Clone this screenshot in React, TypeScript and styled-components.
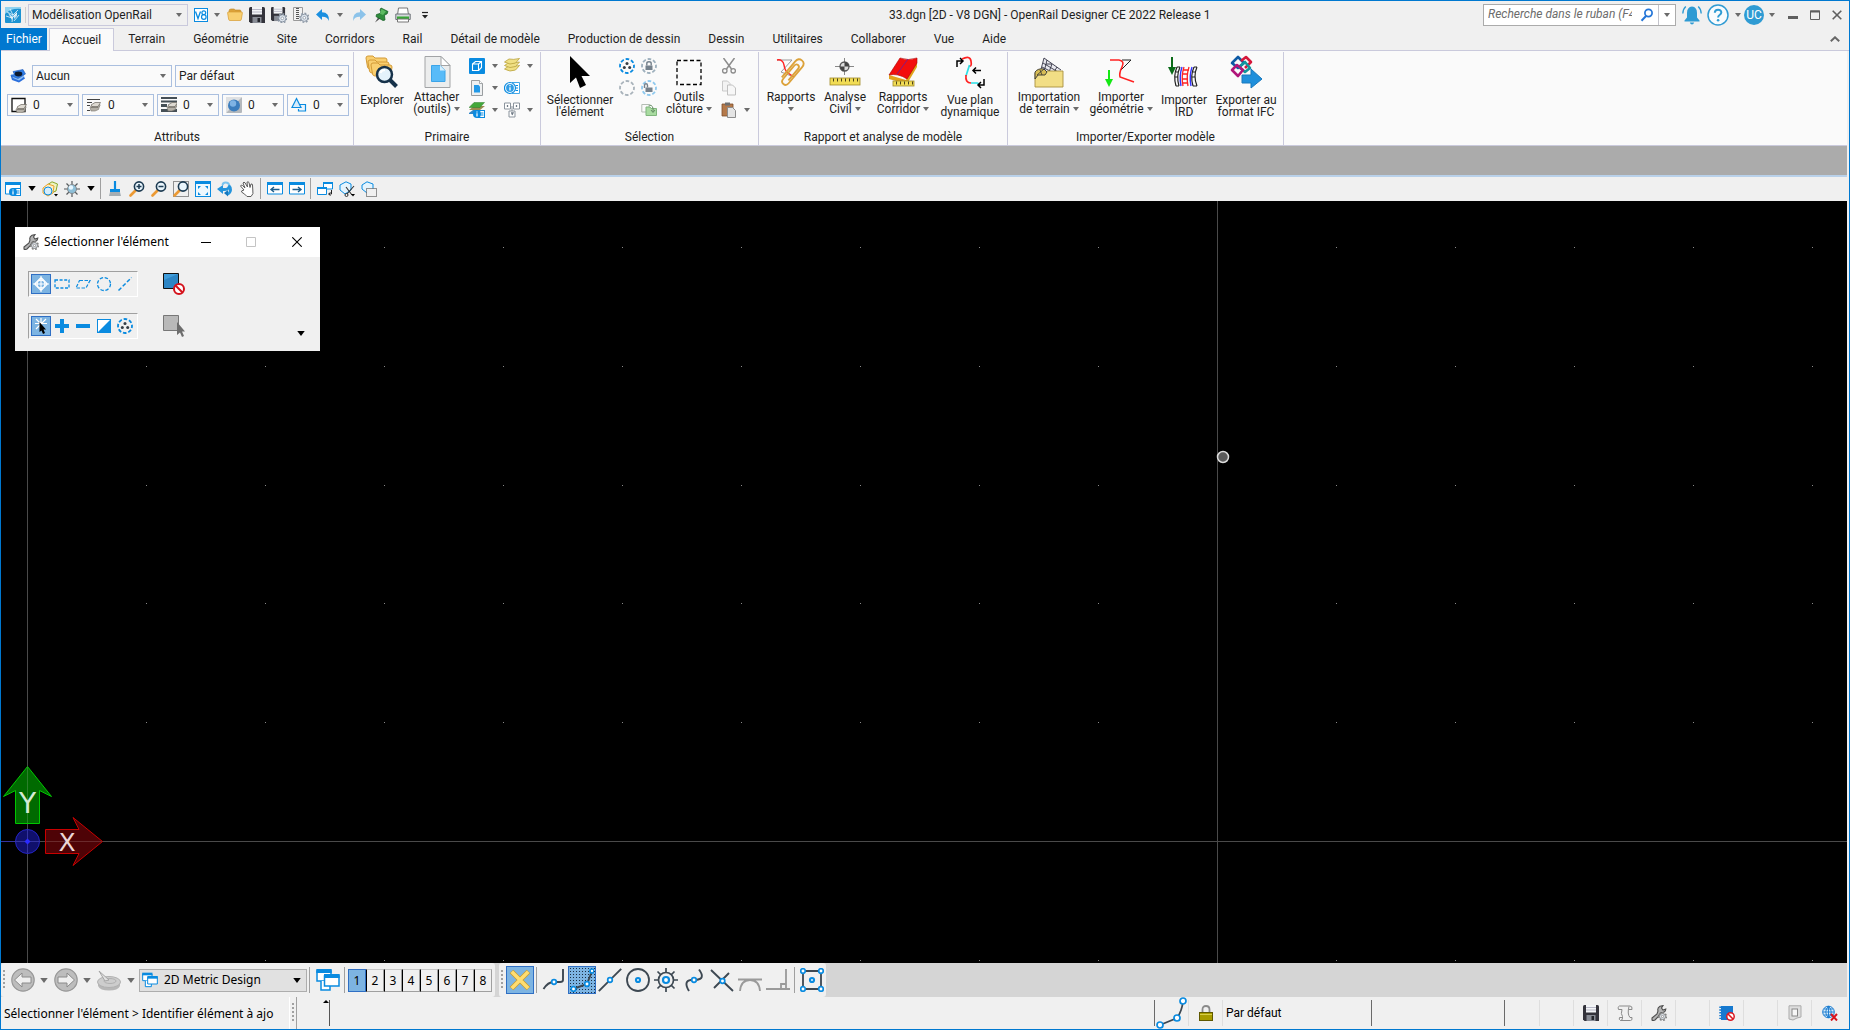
import React from "react";
import styled, { createGlobalStyle, css } from "styled-components";

/* ---------- tokens ---------- */
const UI = `Roboto, "Open Sans", sans-serif`;
const WIDE = `"Noto Sans", "Open Sans", sans-serif`;
const BLUE = "#0a8be0";
const ACCENT = "#0078d0";
const CHROME = "#f0f0f0";
const PANEL = "#fafafa";
const LINE = "#cacadc";
const PRESSED = "#7db4e2";

const Global = createGlobalStyle`
  *, *::before, *::after { box-sizing: border-box; }
  html, body, #root { height: 100%; }
  body { margin: 0; font: 12px/16px ${UI}; color: #1e1e1e; background: ${CHROME}; }
  button, select, input { font: inherit; color: inherit; margin: 0; }
  button { border: 0; padding: 0; background: none; }
  svg { display: block; flex: none; }
`;

/* ---------- drawing helpers ---------- */
type SvgProps = { w?: number; h?: number; box?: string; children: React.ReactNode };
const Svg = ({ w = 16, h = w, box, children }: SvgProps) => (
  <svg width={w} height={h} viewBox={box ?? `0 0 ${w} ${h}`} fill="none" aria-hidden="true">
    {children}
  </svg>
);

const Caret = ({ color = "#6b6b6b", size = 6 }: { color?: string; size?: number }) => (
  <Svg w={size} h={size / 2 + 1} box="0 0 6 4">
    <path d="M0 0H6L3 4Z" fill={color} />
  </Svg>
);

/* ---------- 16px icons ---------- */
const LogoIcon = () => (
  <Svg>
    <rect width="16" height="16" rx="1" fill="#1c93d2" />
    <path d="M0 7Q6 1 16 2V0H0Z" fill="#8fd2f0" />
    <path d="M2 5L8 8L7 15M5 2L8 8L13 3M1 9L7 11L12 6M9 14L14 8" stroke="#fff" strokeWidth=".9" opacity=".8" />
    <path d="M3 6L7 9V13ZM9 8L12 5V9L9 12Z" fill="#fff" opacity=".75" />
  </Svg>
);
const V8Icon = () => (
  <Svg w={14}>
    <rect x=".5" y=".5" width="13" height="13" fill="#fff" stroke={BLUE} />
    <path d="M1.500 3.500L4 10.500L6.500 3.500" stroke={BLUE} strokeWidth="1.300" />
    <circle cx="9.800" cy="4.700" r="1.900" stroke={BLUE} strokeWidth="1.200" />
    <circle cx="9.800" cy="9" r="2.300" stroke={BLUE} strokeWidth="1.200" />
  </Svg>
);
const FolderIcon = () => (
  <Svg>
    <path d="M2 4Q2 2 4 2H7L8.500 3H13Q14 3 14 4.500V6H2Z" fill="#dba23a" stroke="#b98325" strokeWidth=".6" />
    <path d="M.6 6Q.5 5 1.500 5H14.500Q15.500 5 15.400 6L14.300 12.500Q14.100 13.500 13 13.500H3Q1.900 13.500 1.700 12.500Z" fill="#f8cf70" stroke="#d79b30" strokeWidth=".7" />
  </Svg>
);
const FloppyShape = () => (
  <>
    <path d="M0 1.500Q0 0 1.500 0H14.500Q16 0 16 1.500V16H1.500L0 14.500Z" fill="#33333b" />
    <rect x="3" y="0" width="10" height="7.500" fill="#f3f5f7" />
    <path d="M3 2.500H13M3 5H13" stroke="#aab" strokeWidth=".8" />
    <rect x="3.500" y="10" width="9" height="6" fill="#888c95" />
    <rect x="8.500" y="11" width="2.500" height="4" fill="#22242a" />
  </>
);
const SaveIcon = () => <Svg><FloppyShape /></Svg>;
const Gear = ({ x, y, r = 3.6, c = "#8d98a6" }: { x: number; y: number; r?: number; c?: string }) => (
  <g>
    <circle cx={x} cy={y} r={r + 0.8} stroke={c} strokeWidth="1.600" strokeDasharray="1.8 1.6" />
    <circle cx={x} cy={y} r={r} fill="#dfe6ee" stroke={c} />
    <circle cx={x} cy={y} r={r / 2.6} fill="#fff" stroke={c} strokeWidth=".8" />
  </g>
);
const SaveSettingsIcon = () => <Svg><g transform="scale(.88)"><FloppyShape /></g><Gear x={11.300} y={11.300} /></Svg>;
const ZipIcon = () => (
  <Svg>
    <path d="M.5 .5H9.500V13.500H.5Z" fill="#f2f2f2" stroke="#9a9a9a" />
    <path d="M4.500 1V13" stroke="#555" strokeWidth="3" strokeDasharray="1 1" />
    <Gear x={11.300} y={10.800} />
  </Svg>
);
const UndoIcon = ({ flip = false, color = "#1a8fe0" }: { flip?: boolean; color?: string }) => (
  <Svg>
    <path transform={flip ? "translate(16 0) scale(-1 1)" : undefined} d="M1 7.500L7 2V5.300Q14.500 5.500 14 14Q12.500 9.500 7 9.700V13Z" fill={color} />
  </Svg>
);
const PinIcon = () => (
  <Svg>
    <path d="M6 9L2 15.500L8 11Z" fill="#555" />
    <path d="M8 1L15 4.500L14 7L12 7.500L11.500 9L12 13L10 13.500L3 9.500L3.500 7.500L7 6.500L8 5L7 3Z" fill="#2f8d3c" stroke="#19632a" strokeWidth=".8" />
    <path d="M8.500 2L13 4.500L10 8L7 6.800Z" fill="#5dbb62" />
  </Svg>
);
const PrintIcon = () => (
  <Svg>
    <path d="M3.500 1H12.500L13.500 8H2.500Z" fill="#fff" stroke="#777" />
    <path d="M.8 7H15.200V12.500H.8Z" fill="#d5d8dc" stroke="#6d7278" />
    <path d="M2 9.500H14V12H2Z" fill="#38a737" />
    <path d="M2.500 12H13.500V15H2.500Z" fill="#fff" stroke="#777" />
  </Svg>
);
const CustomizeIcon = () => (
  <Svg w={8}>
    <path d="M1 1.500H7" stroke="#222" strokeWidth="1.200" />
    <path d="M1 4H7L4 7.500Z" fill="#222" />
  </Svg>
);
const SearchIcon = () => (
  <Svg w={14}>
    <circle cx="8.500" cy="5" r="3.600" stroke="#2375d8" strokeWidth="1.700" />
    <path d="M6 8L1.500 12.700" stroke="#2375d8" strokeWidth="2" />
  </Svg>
);
const BellIcon = () => (
  <Svg w={20}>
    <path d="M10 1.500Q15 2 15 8V12.500L17.500 15.500V16.500H2.500V15.500L5 12.500V8Q5 2 10 1.500Z" fill="#2f9bd3" />
    <path d="M7.800 17.500H12.200Q11.500 19.500 10 19.500T7.800 17.500Z" fill="#2f9bd3" />
    <path d="M3.800 1.500Q1 4 .8 8.500M16.200 1.500Q19 4 19.200 8.500" stroke="#2f9bd3" strokeWidth="1.400" />
  </Svg>
);
const HelpIcon = () => (
  <Svg w={22}>
    <circle cx="11" cy="11" r="10" fill="#f8fbfd" stroke="#2f9bd3" strokeWidth="1.500" />
    <path d="M7.800 8.800Q7.900 5.800 11.100 5.800T14.300 8.600Q14.300 10 12.600 11Q11.100 12 11.100 13.500" stroke="#2f9bd3" strokeWidth="2" />
    <circle cx="11.100" cy="16.200" r="1.300" fill="#2f9bd3" />
  </Svg>
);
const MinIcon = () => <Svg w={10}><rect y="6" width="10" height="3" fill="#5f5f5f" /></Svg>;
const MaxIcon = () => (
  <Svg w={10}><path d="M.5 1H9.500V9.500H.5Z" stroke="#5f5f5f" /><path d="M0 1.500H10" stroke="#5f5f5f" strokeWidth="2" /></Svg>
);
const CloseIcon = () => <Svg w={10}><path d="M.7 .7L9.300 9.300M9.300 .7L.7 9.300" stroke="#5f5f5f" strokeWidth="1.600" /></Svg>;
const ChevronUp = () => <Svg w={10} h={6}><path d="M.8 5.200L5 1.300L9.200 5.200" stroke="#666" strokeWidth="2" /></Svg>;

const LayerIcon = () => (
  <Svg>
    <path d="M.5 7L2 12L9 14.500L15 10.500L13 7Z" fill="#2a6fdc" />
    <path d="M1 6L3 10L9 12.500L14.500 8.500L12 6Z" fill="#8cc0f8" />
    <path d="M3 3.500L13 1.500L15.500 6L8 10.500L1.500 8L4.500 6.500Z" fill="#2f7de6" stroke="#1c58b8" strokeWidth=".6" />
    <ellipse cx="8.500" cy="6" rx="3.800" ry="2.400" fill="#0c1a30" />
  </Svg>
);
const Stack = ({ x = 5, y = 7 }: { x?: number; y?: number }) => (
  <g transform={`translate(${x} ${y})`}>
    <path d="M0 5L4 2.500H10L8.500 7.500L5 9H1Z" fill="#b5b1a8" stroke="#77736b" strokeWidth=".6" />
    <path d="M1 3L5 .5H10.500L8 4.500H2ZM1 5.500H8L10 3.500" fill="#dedad2" stroke="#6a665e" strokeWidth=".7" />
  </g>
);
const ColorBoxIcon = () => (
  <Svg><path d="M1 1.500H14V14.500H1Z" fill="#fff" stroke="#111" strokeWidth="1.300" /><Stack /></Svg>
);
const LineStyleIcon = () => (
  <Svg><path d="M1 2.500H14M1 5.500H6M1 8.500H4M1 13.500H4" stroke="#444" strokeWidth="1.200" /><Stack x={4} y={5} /></Svg>
);
const WeightIcon = () => (
  <Svg><path d="M0 1H16M0 4.500H16" stroke="#454f56" strokeWidth="1.800" /><path d="M0 8.500H6M0 13.500H16" stroke="#454f56" strokeWidth="3" /><Stack y={5} x={6} /></Svg>
);
const SphereIcon = () => (
  <Svg>
    <rect width="16" height="16" rx="1" fill="#b4b8bc" />
    <path d="M0 0H16L0 16Z" fill="#dfe1e3" />
    <circle cx="8" cy="8.500" r="6" fill="#3c7dbd" />
    <circle cx="7" cy="6.500" r="3.200" fill="#7fb3e4" />
  </Svg>
);
const PriorityIcon = () => (
  <Svg>
    <path d="M8 7.500H14.500V14H7.500V12" fill="#eaf4fc" stroke={BLUE} strokeWidth="1.200" />
    <path d="M5.500 1.500L10 10.500H1Z" fill="#d6ecfb" stroke={BLUE} strokeWidth="1.200" />
  </Svg>
);

const CubeIcon = () => (
  <Svg>
    <rect width="16" height="16" rx="1" fill={BLUE} />
    <path d="M3.500 6H9.500V12.500H3.500ZM3.500 6L6.500 3.500H12.500V9.500L9.500 12.500M9.500 6L12.500 3.500" stroke="#fff" strokeWidth="1.100" />
  </Svg>
);
const DocIcon = () => (
  <Svg>
    <path d="M2.500 .5H10.500L13.500 3.500V15.500H2.500Z" fill="#eef0f1" stroke="#8f9396" strokeWidth=".9" />
    <path d="M10.500 .5V3.500H13.500" fill="#fff" stroke="#8f9396" strokeWidth=".8" />
    <path d="M5 5H9.500L11 6.500V12.500H5Z" fill="#2299e8" />
  </Svg>
);
const InfoBadge = ({ x, y }: { x: number; y: number }) => (
  <g transform={`translate(${x} ${y})`}>
    <rect x="4" y=".5" width="7.500" height="7" fill="#fff" stroke={BLUE} />
    <path d="M8 3H10.500M8 5H10.500" stroke={BLUE} />
    <circle cx="4" cy="4" r="4" fill={BLUE} />
    <path d="M4 3.300V6.500M4 1.500V2.500" stroke="#fff" strokeWidth="1.200" />
  </g>
);
const GreenInfoIcon = () => (
  <Svg>
    <path d="M0 11L4 8H14L10 12H0Z" fill="#2f86c8" />
    <path d="M0 8L5 4H16L11 8Z" fill="#9c8a50" />
    <path d="M0 5.500L5 .5H15.500L11 5.500Z" fill="#43a83a" stroke="#2d7e2a" strokeWidth=".5" />
    <InfoBadge x={4} y={8} />
  </Svg>
);
const YellowLayersIcon = () => (
  <Svg>
    {[8, 4.5, 1].map((y) => (
      <path key={y} d={`M.5 ${3 + y}L5 ${y}Q9 ${1 + y} 15.500 ${y - 0.500}L11.500 ${4 + y}Q6 ${6.500 + y} .5 ${3 + y}Z`} fill="#f0e084" stroke="#b9a23c" strokeWidth=".8" />
    ))}
  </Svg>
);
const InfoPanelIcon = () => (
  <Svg>
    <path d="M8 2.500H15.500V13.500H8" fill="#fff" stroke="#45a8e8" />
    <path d="M11.500 5.500H14M12 8H14M11.500 10.500H14" stroke={BLUE} />
    <circle cx="6" cy="8" r="5.500" fill="#fff" stroke={BLUE} strokeWidth="1.200" />
    <circle cx="6" cy="8" r="3.900" fill="#2f9de6" />
    <path d="M6 7.300V10.500M6 5V6.300" stroke="#fff" strokeWidth="1.300" />
  </Svg>
);
const KeysIcon = () => (
  <Svg>
    <path d="M.5 1H6.500V7H.5ZM9.500 1H15.500V7H9.500ZM5 9H11V15H5Z" fill="#fff" stroke="#8b949d" />
    <path d="M3.500 3V5M12.500 3V5M7 11H9L8 13" stroke="#6f7a85" strokeWidth="1.300" />
    <path d="M8 4V9" stroke="#8b949d" />
  </Svg>
);
const DashRing = ({ c, children }: { c: string; children?: React.ReactNode }) => (
  <Svg>
    <circle cx="8" cy="8" r="7" stroke={c} strokeWidth="1.800" strokeDasharray="3.6 1.9" strokeDashoffset="1.600" />
    {children}
  </Svg>
);
const Dots = ({ c = "#333c44" }: { c?: string }) => (
  <g fill={c}><circle cx="8" cy="5.500" r="1.500" /><circle cx="5.300" cy="9.600" r="1.500" /><circle cx="10.700" cy="9.600" r="1.500" /></g>
);
const LockGlyph = ({ open = false }: { open?: boolean }) => (
  <g>
    <path d="M4.500 7.500H11.500V12H4.500Z" fill="#75818c" />
    <path d={open ? "M3.500 8V5.500Q3.500 3.800 5 3.800T6.500 5.500V7.500" : "M5.800 7.500V5.500Q5.800 3.800 8 3.800T10.200 5.500V7.500"} stroke="#75818c" strokeWidth="1.400" />
  </g>
);
const CopyGreenIcon = () => (
  <Svg>
    <path d="M.8 2.500H8V10H.8Z" stroke="#b3bcb3" />
    <path d="M5 5H9L10 6.500H15.500V13.500H5Z" fill="#a8dba0" stroke="#7fb57c" />
    <path d="M8 3Q13 3 12 10M10 8L12 10.500L14 8" stroke="#628b62" />
  </Svg>
);
const CutIcon = ({ c = "#8c8c8c" }: { c?: string }) => (
  <Svg>
    <path d="M2.500 0L10.500 11M13.500 0L5.500 11" stroke={c} strokeWidth="1.500" />
    <circle cx="3.800" cy="12.800" r="2.200" stroke={c} strokeWidth="1.300" />
    <circle cx="12.200" cy="12.800" r="2.200" stroke={c} strokeWidth="1.300" />
  </Svg>
);
const CopyIcon = () => (
  <Svg>
    <path d="M1.500 1H6.500L9 3.500V11H1.500Z" fill="#f3f3f3" stroke="#c9c9c9" />
    <path d="M6.500 5H11.500L14.500 8V15H6.500Z" fill="#f7f7f7" stroke="#c0c0c0" />
  </Svg>
);
const PasteIcon = () => (
  <Svg>
    <path d="M1 2H12V14H1Z" fill="#b4794a" stroke="#7d4f2b" strokeWidth=".8" />
    <path d="M4 .5H9V3.500H4Z" fill="#6e6e6e" />
    <path d="M6.500 5.500H11.500L14.500 8.500V15.500H6.500Z" fill="#e4e4e4" stroke="#8c8c8c" />
  </Svg>
);

/* ---------- large ribbon icons ---------- */
const ExplorerIcon = () => (
  <Svg w={34}>
    {[[1, 1], [3, 5], [6, 8]].map(([x, y]) => (
      <path key={x} d={`M${x} ${y + 2}Q${x} ${y} ${x + 2} ${y}H${x + 7}L${x + 9} ${y + 2}H${x + 19}Q${x + 21} ${y + 2} ${x + 21} ${y + 4}L${x + 20} ${y + 11}Q${x + 20} ${y + 13} ${x + 18} ${y + 13}H${x + 4}Q${x + 2} ${y + 13} ${x + 1.500} ${y + 11}Z`} fill="#f9cf70" stroke="#d39a36" />
    ))}
    <circle cx="19.500" cy="19.500" r="7.500" fill="#e4f2fb" stroke="#17324a" strokeWidth="2.500" />
    <path d="M15.500 18Q16.500 15 20 15" stroke="#fff" strokeWidth="2" />
    <path d="M25 25L31.500 31.500" stroke="#17324a" strokeWidth="4" />
  </Svg>
);
const AttachIcon = () => (
  <Svg w={34}>
    <path d="M5 1.500H21L30 10.500V32.500H5Z" fill="#eceded" stroke="#a2a4a6" />
    <path d="M21 1.500V10.500H30Z" fill="#fff" stroke="#a2a4a6" />
    <path d="M11.500 10.500H20L25 15.500V26.500H11.500Z" fill="#58bbf8" stroke="#3ba4e8" />
    <path d="M20 10.500V15.500H25Z" fill="#d6effd" />
  </Svg>
);
const PointerIcon = () => (
  <Svg w={34}><path d="M7 1L7 28L13 22.500L17 33L23 30L18.500 21H27Z" fill="#000" /></Svg>
);
const FenceIcon = () => (
  <Svg w={34}><path d="M5 5.500H29V29.500H5Z" stroke="#000" strokeWidth="1.300" strokeDasharray="4 2.5" /></Svg>
);
const ReportsIcon = () => (
  <Svg w={34}>
    <path d="M3 5H18L7 17L20 22" stroke="#999" />
    <path d="M3 5Q9 4 10 10T14 18L20 22" stroke="#f22" strokeWidth="1.500" />
    <g transform="rotate(40 18 18)" stroke="#dca23a" strokeWidth="1.800">
      <path d="M13 28V7Q13 2 17.500 2T22 7V28Q22 32 18.500 32T15 28V11Q15 8 17.500 8T20 11V26" />
    </g>
  </Svg>
);
const Ruler = ({ x, y, w, h }: { x: number; y: number; w: number; h: number }) => (
  <g>
    <rect x={x} y={y} width={w} height={h} fill="#f1dc55" stroke="#a08a28" strokeWidth=".8" />
    <path d={`M${x + 3} ${y + 2}H${x + w - 1}`} stroke="#4c421a" strokeWidth="3" strokeDasharray="1 3" />
  </g>
);
const AnalysisIcon = () => (
  <Svg w={34}>
    <path d="M16.500 3V20M7 11.500H26" stroke="#888" />
    <circle cx="16.500" cy="11.500" r="4.500" fill="#ddd" stroke="#555" strokeWidth="1.300" />
    <path d="M16.500 7A4.500 4.500 0 0 1 21 11.500H16.500ZM16.500 16A4.500 4.500 0 0 1 12 11.500H16.500Z" fill="#444" />
    <Ruler x={2} y={23} w={30} h={7} />
  </Svg>
);
const CorridorIcon = () => (
  <Svg w={34}>
    <path d="M3 20L20 25L31 6V12L21 29L3 24Z" fill="#e0a31c" />
    <path d="M3 20L14 3Q22 6 31 3V8L21 24Q12 18 3 20Z" fill="#f30d0d" stroke="#a00" strokeWidth=".6" />
    <path d="M22 4L11 19" stroke="#6a20a0" strokeWidth=".8" />
    <Ruler x={7} y={26} w={21} h={5} />
  </Svg>
);
const PlanViewIcon = () => (
  <Svg w={34}>
    <path d="M4 12V6H9M7 3L10 6L7 9" stroke="#000" strokeWidth="1.500" />
    <path d="M9 4Q17 0 18 6T16 11" stroke="#f22" strokeWidth="1.700" />
    <path d="M16.500 10L13 21" stroke="#2bdfe6" strokeWidth="1.700" />
    <path d="M13 20Q12 28 18 28" stroke="#f22" strokeWidth="1.700" />
    <path d="M18 28H24Q26 28 26 31" stroke="#2bdfe6" strokeWidth="1.700" />
    <path d="M28 15.500H20M23 12.500L20 15.500L23 18.500M31 24V30H26M28 27L25 30L28 33" stroke="#000" strokeWidth="1.500" />
  </Svg>
);
const TerrainIcon = () => (
  <Svg w={34}>
    <path d="M12 3L29 15V18H9Z" fill="#e8e8ee" />
    <path d="M12 3L29 15M12 3L8 18M15 5L12 17M20 9L17 17M25 12L22 17M11 8L26 17M10 12L20 17M14 9H20" stroke="#334" strokeWidth=".9" />
    <path d="M3 18H13L15 16H31V32H3Z" fill="#f2de85" stroke="#a8903e" strokeWidth=".9" />
    <path d="M3 24V17Q6 13 12 14L15 17L13 20H6Z" fill="#d8bd55" stroke="#333" strokeWidth=".9" />
    <path d="M5 20L12 14M8 15L10 20" stroke="#333" strokeWidth=".8" />
  </Svg>
);
const GeometryIcon = () => (
  <Svg w={34}>
    <path d="M18 5H27L16 16" stroke="#222" />
    <path d="M6 5H15Q21 6 18 12T16 22L30 27" stroke="#f22" strokeWidth="1.600" />
    <path d="M5 15V28" stroke="#14e814" strokeWidth="2" />
    <path d="M1 24H9L5 32Z" fill="#14e814" />
  </Svg>
);
const IrdIcon = () => (
  <Svg w={34}>
    <path d="M5 2V14" stroke="#0a6a18" strokeWidth="2" /><path d="M1 12H9L5 20Z" fill="#0a6a18" />
    <path d="M10 12Q6 21 9 31M13 12Q9 21 12 31M27 12Q23 21 26 31M30 12Q26 21 30 31M10 12H13M9 17H11M8 22H11M9 31H12M27 12H30M25 17H29M25 22H28M26 31H30" stroke="#222" strokeWidth="1.200" />
    <path d="M15 12Q12 21 14 31M25 12Q22 21 24 31" stroke="#33f" strokeWidth="1.400" />
    <path d="M17 12Q14 21 16 31M22 12Q19 21 21 31M16 15H22M15 19H21M15 24H21M16 28H21" stroke="#f22" strokeWidth="1.300" />
  </Svg>
);
const IfcIcon = () => (
  <Svg w={34}>
    <g strokeWidth="2.600" strokeLinejoin="round">
      <path d="M3 8L9 2L15 8L9 13Z" stroke="#0d5aa5" />
      <path d="M12 6L17 2L22 7L16 13" stroke="#d5173a" />
      <path d="M10 12L16 7L21 13L16 17Z" stroke="#11969d" />
      <path d="M8 10L3 15L9 21L14 15Z" stroke="#b0157a" />
    </g>
    <path d="M13 20H22V14L33 24L22 33V28H13Z" fill="#1f8fdb" stroke="#1878bd" />
  </Svg>
);

/* ---------- view toolbar icons ---------- */
const WindowFrame = ({ children, h = 11 }: { children?: React.ReactNode; h?: number }) => (
  <g>
    <path d={`M.5 2H15.500V${2 + h}H.5Z`} fill="#fff" stroke={BLUE} />
    <path d="M0 2.500H16" stroke={BLUE} strokeWidth="3" />
    {children}
  </g>
);
const ViewAttrIcon = () => <Svg><WindowFrame /><InfoBadge x={4} y={7} /></Svg>;
const DisplayStyleIcon = () => (
  <Svg>
    <path d="M5 4L10 .8L15.500 3L14 10L9 12Z" fill="#eef2c0" stroke="#8aa82a" />
    <path d="M1 7L6 3L12 5L11 12L6 15L1 12Z" fill="#ffeec0" stroke="#e9a22c" />
    <circle cx="6" cy="10" r="4" fill="#d5edfb" stroke={BLUE} />
    <path d="M12 13H16L14 15.500Z" fill="#000" />
  </Svg>
);
const SunIcon = () => (
  <Svg>
    <path d="M8 0V16M0 8H16M2.500 2.500L13.500 13.500M13.500 2.500L2.500 13.500" stroke="#55595c" strokeWidth="1.200" />
    <circle cx="8" cy="8" r="4.500" fill="#8dbfd8" stroke="#85898c" />
    <circle cx="7" cy="6.500" r="2.200" fill="#e7f6ff" />
  </Svg>
);
const BrushIcon = () => (
  <Svg>
    <path d="M8 0V9" stroke={BLUE} strokeWidth="2.200" />
    <path d="M3 8H13V11H3Z" fill={BLUE} />
    <path d="M3 11H13L14 15H2Z" fill="#a4adb3" />
  </Svg>
);
const Lens = ({ sign }: { sign?: string }) => (
  <g>
    <path d="M6.500 9.500L1.500 14.500" stroke="#ec9a34" strokeWidth="2.600" strokeLinecap="round" />
    <circle cx="10" cy="5.500" r="4.600" fill="#e9f5fc" stroke="#1d3b52" strokeWidth="1.600" />
    {sign && <path d={sign} stroke="#1d3b52" strokeWidth="1.500" />}
  </g>
);
const ZoomInIcon = () => <Svg><Lens sign="M7.500 5.500H12.500M10 3V8" /></Svg>;
const ZoomOutIcon = () => <Svg><Lens sign="M7.500 5.500H12.500" /></Svg>;
const ZoomWindowIcon = () => (
  <Svg><path d="M.5 .5H15.500V15.500H.5Z" stroke="#333" strokeDasharray="1 1" /><Lens /></Svg>
);
const FitIcon = () => (
  <Svg>
    <rect x=".5" y=".5" width="15" height="15" fill="#eef8fe" stroke={BLUE} />
    <path d="M0 1.500H16" stroke={BLUE} strokeWidth="3" />
    <path d="M3 5H6L3 8ZM13 5H10L13 8ZM3 14H6L3 11ZM13 14H10L13 11Z" fill={BLUE} />
  </Svg>
);
const RotateIcon = () => (
  <Svg>
    <path d="M12.500 5Q12 1.500 8.500 1.500Q6 1.500 5.500 4" stroke="#7cc4ee" strokeWidth="2" />
    <path d="M6 4V7Q11 7.500 11 4.500L13 4Q15.500 6 15 9Q14.500 12.500 11 14.500V11.500Q12.500 10 11.500 8.500Q9 10.500 6 10V13L0 8Z" fill="#2494dc" />
    <path d="M11 9V15.500L7 12Z" fill="#1578bf" />
  </Svg>
);
const HandIcon = () => (
  <Svg>
    <path d="M5 9L1.500 5Q2 3.500 3.500 4.500L6 7L4 2Q5 .5 6 1.800L8.500 6L8 1.200Q9.200 .3 10 1.500L11 6.500L12 3Q13.500 2.700 13.500 4L13.800 9Q15 13 12 15.500H8Q6 13 2.500 11Q2 9.500 5 9Z" fill="#fff" stroke="#5b5b5b" />
  </Svg>
);
const PrevViewIcon = () => <Svg><WindowFrame><path d="M12.500 8.500H4M7 6L4 8.500L7 11" stroke="#1d5d8a" strokeWidth="1.400" /></WindowFrame></Svg>;
const NextViewIcon = () => <Svg><WindowFrame><path d="M3.500 8.500H12M9 6L12 8.500L9 11" stroke="#1d5d8a" strokeWidth="1.400" /></WindowFrame></Svg>;
const CopyViewIcon = () => (
  <Svg>
    <path d="M6.500 1.500H15.500V8H6.500Z" fill="#fff" stroke={BLUE} /><path d="M6 2H16" stroke={BLUE} strokeWidth="2" />
    <path d="M.5 6.500H9.500V13.500H.5Z" fill="#fff" stroke={BLUE} /><path d="M0 7H10" stroke={BLUE} strokeWidth="2" />
    <path d="M14.500 9V13H12M13.500 11.500L11.500 13L13.500 14.500" stroke="#222" />
  </Svg>
);
const ClipVolumeIcon = () => (
  <Svg>
    <path d="M1 4L7 .8L12 3V9L6 13L1 9Z" fill="#e5f4fd" stroke={BLUE} />
    <path d="M7 6L13 14M15 5L8 13" stroke="#333" strokeWidth="1.100" />
    <circle cx="7.500" cy="14" r="1.500" stroke="#333" /><path d="M12 13H16L14 15.500Z" fill="#000" />
  </Svg>
);
const ClipMaskIcon = () => (
  <Svg>
    <path d="M1 4L6 .8L12 3V9L6 12L1 8Z" fill="#e5f4fd" stroke={BLUE} />
    <path d="M5.500 7.500H15.500V15.500H5.500Z" fill="#f0f0f0" stroke="#333" strokeDasharray="1 1" />
  </Svg>
);

/* ---------- dialog icons ---------- */
const WrenchGearIcon = () => (
  <Svg>
    <path d="M1 13L6 9L7 6Q6 3 9 1.200L12 .6L10.500 3L12 5L14.800 4Q14.500 7 12 7.500L9.500 8L7 12L4 15Q2 16 1 15Z" fill="#b4b4b4" stroke="#4f4f4f" strokeWidth="1.100" />
    <Gear x={11.500} y={11.500} r={3} c="#838383" />
  </Svg>
);
const TargetIcon = () => (
  <Svg>
    <circle cx="8" cy="8" r="4" stroke="#fff" strokeWidth="1.300" />
    <path d="M8 0V16M0 8H16M8 1.500L14.500 8L8 14.500L1.500 8Z" stroke="#fff" strokeWidth="1.100" />
  </Svg>
);
const DashRect = () => <Svg><path d="M1 4H15V12H1Z" stroke={BLUE} strokeWidth="1.300" strokeDasharray="3 1.6" /></Svg>;
const DashPara = () => <Svg><path d="M4.500 4.500H15L11 12H1Z" stroke={BLUE} strokeWidth="1.200" strokeDasharray="3.5 1.5" /></Svg>;
const DashCircle = () => <Svg><circle cx="8" cy="8" r="6.500" stroke={BLUE} strokeWidth="1.300" strokeDasharray="3.4 1.7" /></Svg>;
const DashLine = () => <Svg><path d="M1.500 14.500L14.500 1.500" stroke={BLUE} strokeWidth="1.500" strokeDasharray="4 2" /></Svg>;
const NewSelIcon = () => (
  <Svg>
    <path d="M8 0V8M3 1L8 6M13 1L8 6M2 5.500H7M14 5.500H8M3 11L8 6" stroke="#fff" strokeWidth="1.200" />
    <path d="M6.500 4V14L8.500 12.500L10 16L12 15L10.500 11.500H13Z" fill="#000" />
  </Svg>
);
const PlusIcon = () => <Svg><path d="M8 1V15M1 8H15" stroke={BLUE} strokeWidth="4" /></Svg>;
const MinusIcon = () => <Svg><path d="M1 8H15" stroke={BLUE} strokeWidth="4" /></Svg>;
const InvertIcon = () => (
  <Svg><rect x="1.500" y="1.500" width="13" height="13" fill="#fff" stroke={BLUE} /><path d="M15 1V15H1Z" fill={BLUE} /></Svg>
);
const DisableIcon = () => (
  <Svg w={22}>
    <path d="M.5 .5H15.500V15.500H.5Z" fill="#3f9ddb" stroke="#111" /><path d="M1 15V7L15 1V15Z" fill="#2075b5" opacity=".6" />
    <circle cx="16" cy="16" r="5" fill="#fff" stroke="#d4111b" strokeWidth="2" /><path d="M12.500 12.500L19.500 19.500" stroke="#d4111b" strokeWidth="2" />
  </Svg>
);
const HandlesIcon = () => (
  <Svg w={22}>
    <path d="M.5 .5H15.500V15.500H.5Z" fill="#b9b9b9" stroke="#777" />
    <path d="M14 7V20L17 17.500L19 22L21 21L19 16.500H22Z" fill="#6d6d6d" />
  </Svg>
);
const DlgMin = () => <Svg w={10}><path d="M0 5.500H10" stroke="#000" /></Svg>;
const DlgMax = () => <Svg w={10}><path d="M.5 .5H9.500V9.500H.5Z" stroke="#c4c4c4" /></Svg>;
const DlgClose = () => <Svg w={10}><path d="M.3 .3L9.700 9.700M9.700 .3L.3 9.700" stroke="#000" strokeWidth="1.100" /></Svg>;

/* ---------- bottom toolbar icons ---------- */
const RoundArrow = ({ flip = false }: { flip?: boolean }) => (
  <Svg w={24}>
    <circle cx="12" cy="12" r="11.200" fill="#bdbdbd" stroke="#989898" strokeWidth="1.200" />
    <path transform={flip ? "translate(24 0) scale(-1 1)" : undefined} d="M3.500 12L11 5V9H20V15H11V19Z" fill="#efefef" stroke="#8a8a8a" />
  </Svg>
);
const DiscIcon = () => (
  <Svg w={26} h={24}>
    <path d="M2 14V18Q4 22.500 13 22.500T24 18V14Z" fill="#b7b7b7" />
    <ellipse cx="13" cy="14" rx="11.500" ry="5.500" fill="#cdcdcd" stroke="#b0b0b0" />
    <ellipse cx="14" cy="13" rx="6" ry="2.500" stroke="#b0b0b0" />
    <path d="M3 3L13 12L9 13Z" fill="#e2e2e2" stroke="#a5a5a5" />
  </Svg>
);
const ViewsIcon = ({ s = 16 }: { s?: number }) => (
  <Svg w={s} box="0 0 24 24">
    <path d="M1 3H15V13H1Z" fill="#fff" stroke={BLUE} strokeWidth="1.500" /><path d="M.3 3H15.700" stroke={BLUE} strokeWidth="4" />
    <path d="M5 13V22H14V13" fill="#fff" stroke={BLUE} strokeWidth="1.500" />
    <path d="M8.500 8H23V18H8.500Z" fill="#fff" stroke={BLUE} strokeWidth="1.500" /><path d="M8 8H23.700" stroke={BLUE} strokeWidth="4" />
  </Svg>
);
const INK = "#3d4852";
const Node = ({ x, y, r = 2.3 }: { x: number; y: number; r?: number }) => (
  <circle cx={x} cy={y} r={r} fill="#fff" stroke={BLUE} strokeWidth="1.700" />
);
const CrossIcon = () => (
  <Svg w={24}>
    <path d="M3.500 3.500L20.500 20.500M20.500 3.500L3.500 20.500" stroke="#c99a2c" strokeWidth="5" />
    <path d="M3.800 3.800L20.200 20.200M20.200 3.800L3.800 20.200" stroke="#ffdd72" strokeWidth="3.600" />
  </Svg>
);
const SnapNear = () => (
  <Svg w={24}><path d="M1.500 21Q6 14 11.500 14H18Q21 14 21 12V1" stroke={INK} strokeWidth="1.900" /><Node x={12} y={14} /></Svg>
);
const SnapKey = () => (
  <Svg w={24}><path d="M3 21L17 16L22 3" stroke={INK} strokeWidth="1.900" /><Node x={3.500} y={21} /><Node x={17} y={16} /><Node x={22} y={3} r={2} /></Svg>
);
const SnapMid = () => (
  <Svg w={24}><path d="M.8 23.200L23.200 .8" stroke={INK} strokeWidth="1.900" /><Node x={12} y={12} /></Svg>
);
const SnapCenter = () => (
  <Svg w={24}><circle cx="12" cy="12" r="11" stroke={INK} strokeWidth="1.800" /><circle cx="12" cy="12" r="2" fill="#fff" stroke={BLUE} strokeWidth="2.200" /></Svg>
);
const SnapOrigin = () => (
  <Svg w={24}>
    <circle cx="12" cy="12" r="7.500" stroke={INK} strokeWidth="1.700" />
    <path d="M12 0V4M12 20V24M0 12H4M20 12H24M3.500 3.500L6.500 6.500M17.500 17.500L20.500 20.500M20.500 3.500L17.500 6.500M6.500 17.500L3.500 20.500" stroke={INK} strokeWidth="1.700" />
    <circle cx="12" cy="12" r="3" fill="#fff" stroke={BLUE} strokeWidth="2.200" />
  </Svg>
);
const SnapBisect = () => (
  <Svg w={24}><path d="M7 23Q1 13 9 12H14Q24 11 17 1.500" stroke={INK} strokeWidth="1.900" /><Node x={12} y={12} /></Svg>
);
const SnapIntersect = () => (
  <Svg w={24}><path d="M1 2L23 23M19 5L4 20" stroke={INK} strokeWidth="1.900" /><Node x={12.500} y={13} /></Svg>
);
const SnapTangent = () => <Svg w={24}><path d="M0 11.500H24M2 23Q3 12 12 12T22 23" stroke="#9a9a9a" strokeWidth="1.800" /></Svg>;
const SnapPerp = () => <Svg w={24}><path d="M0 21H24M20 1V21M15 21V16H20" stroke="#9a9a9a" strokeWidth="1.800" /></Svg>;
const SnapMulti = () => (
  <Svg w={24}>
    <path d="M3 3H21V21H3Z" stroke={INK} strokeWidth="1.800" />
    <Node x={3} y={3} /><Node x={21} y={3} /><Node x={3} y={21} /><Node x={21} y={21} />
    <circle cx="12" cy="12" r="2" fill="#fff" stroke={BLUE} strokeWidth="2.200" />
  </Svg>
);

/* ---------- status icons ---------- */
const StatusSnapIcon = () => (
  <Svg w={32}>
    <path d="M4 28L21 21Q26 14 27 4" stroke={INK} strokeWidth="1.800" /><Node x={4} y={28} r={3} /><Node x={21} y={21} r={3} /><Node x={27} y={4} r={3} />
  </Svg>
);
const PadlockIcon = () => (
  <Svg>
    <path d="M4.500 8V4.500Q4.500 1 8 1T11.500 4.500V8" stroke="#8a8a8a" strokeWidth="1.800" />
    <rect x="1.500" y="7.500" width="13" height="8" fill="#a89c00" stroke="#5f5800" />
    <path d="M2 9.500H14" stroke="#d8cf4a" />
  </Svg>
);
const ScrollIcon = () => (
  <Svg><path d="M2.500 1H13Q15.500 1 15 4.500H12M2.500 1Q0 2 1.500 4.500H5Q3.500 9 5.500 11.500V13Q5.500 15.500 3.500 15.500M12 1.500Q10 9 13 12.500H15Q15.500 15.500 13.500 15.500H3.500Q1.500 14.500 2.500 12.500H5.500" stroke="#8a8a8a" /></Svg>
);
const BookBanIcon = () => (
  <Svg>
    <path d="M2 1H14V15H2Z" fill="#1679cf" /><path d="M1.500 1.500V15" stroke="#1679cf" strokeWidth="2.400" strokeDasharray="1.4 1.4" />
    <circle cx="11.500" cy="11.500" r="3.700" fill="#fff" stroke="#dc1820" strokeWidth="1.500" /><path d="M9 9L14 14" stroke="#dc1820" strokeWidth="1.500" />
  </Svg>
);
const ShieldIcon = () => (
  <Svg w={14} h={16}><path d="M1 .8H13V12Q9 12.500 5 15L1 14Z" fill="#dedede" stroke="#ababab" /><rect x="4" y="4" width="5.500" height="7" fill="#f7f7f7" stroke="#888" /></Svg>
);
const GlobeXIcon = () => (
  <Svg>
    <circle cx="6.500" cy="7" r="5.800" fill="#d5ebfa" stroke="#1679cf" /><path d="M1 7H12M6.500 1V13M2 4H11M2 10H11M6.500 1Q1 7 6.500 13M6.500 1Q12 7 6.500 13" stroke="#1679cf" strokeWidth=".9" />
    <path d="M9 9L15 15.500M15 9L9 15.500" stroke="#d8141c" strokeWidth="2" />
  </Svg>
);

/* ---------- layout ---------- */
const Shell = styled.div`
  min-height: 100vh;
  display: flex;
  flex-direction: column;
  border: 1px solid ${ACCENT};
  background: ${CHROME};
`;
const TitleBar = styled.header`
  display: flex;
  align-items: center;
  height: 27px;
  padding: 0 1px 0 4px;
`;
const LogoCell = styled.div`
  padding-right: 4px;
  margin-right: 2px;
  border-right: 1px solid #cfcfcf;
`;
const QuickBar = styled.div`
  display: flex;
  align-items: center;
  gap: 2px;
  margin-left: 3px;
`;
const DropPair = styled.div`
  display: flex;
  align-items: center;
`;
const IconButton = styled.button<{ $w?: number; $h?: number }>`
  display: flex;
  align-items: center;
  justify-content: center;
  flex: none;
  width: ${(p) => p.$w ?? 22}px;
  height: ${(p) => p.$h ?? 22}px;
`;
const Grow = styled.div<{ $f?: number }>`
  flex: ${(p) => p.$f ?? 1};
`;
const Title = styled.h1`
  margin: 0;
  font: inherit;
  white-space: nowrap;
`;
const SearchBox = styled.div`
  display: flex;
  align-items: center;
  width: 193px;
  height: 22px;
  border: 1px solid #ababab;
  background: #fff;
`;
const SearchInput = styled.input`
  flex: 1;
  min-width: 0;
  height: 20px;
  padding: 0 0 2px 4px;
  margin-right: 4px;
  border: 0;
  background: none;
  font-style: italic;
  &::placeholder { color: #6c6c6c; opacity: 1; }
`;
const SearchMore = styled(IconButton)`
  border-left: 1px solid #c4c4cc;
`;
const TitleActions = styled.div`
  display: flex;
  align-items: center;
  margin-left: 4px;
`;
const Avatar = styled.button`
  width: 20px;
  height: 20px;
  border-radius: 50%;
  background: #2f9bd3;
  color: #fff;
  line-height: 20px;
`;
const WindowButtons = styled.div`
  display: flex;
  margin-left: 2px;
`;

const TabStrip = styled.nav`
  display: flex;
  height: 23px;
  border-bottom: 1px solid ${LINE};
`;
const FileTab = styled.button`
  width: 46px;
  margin-right: 2px;
  background: ${ACCENT};
  color: #fff;
`;
const Tab = styled.button<{ $active?: boolean }>`
  padding: 0 14px;
  white-space: nowrap;
  ${(p) =>
    p.$active &&
    css`
      padding: 0 12px;
      margin-bottom: -1px;
      border: 1px solid ${LINE};
      border-bottom: 0;
      background: ${PANEL};
    `}
`;

const Ribbon = styled.div`
  display: flex;
  height: 95px;
  margin-right: 2px;
  border-bottom: 1px solid ${LINE};
  background: ${PANEL};
`;
const Group = styled.section<{ $w: number }>`
  display: flex;
  flex-direction: column;
  width: ${(p) => p.$w}px;
  margin-top: 1px;
  border-right: 1px solid ${LINE};
`;
const GroupBody = styled.div`
  display: flex;
  flex: 1;
  padding: 3px 3px 0;
`;
const GroupName = styled.h2`
  margin: 0;
  height: 16px;
  font: inherit;
  line-height: 16px;
  text-align: center;
`;
const BigButton = styled.button<{ $w: number; $low: boolean }>`
  display: flex;
  flex-direction: column;
  align-items: center;
  flex: none;
  width: ${(p) => p.$w}px;
  gap: ${(p) => (p.$low ? 5 : 2)}px;
  line-height: 12px;
`;
const BigLine = styled.span`
  display: flex;
  align-items: center;
  justify-content: center;
  gap: 3px;
  height: 12px;
  white-space: nowrap;
`;
const SmallColumn = styled.div`
  display: flex;
  flex-direction: column;
`;
const SmallGrid = styled.div`
  display: grid;
  grid-template-columns: 22px 22px;
  align-content: start;
`;
const AttrBody = styled.div`
  display: flex;
  flex-direction: column;
  flex: 1;
  gap: 7px;
  padding: 13px 3px 0 6px;
`;
const AttrRow = styled.div`
  display: flex;
  align-items: center;
  gap: 3px;
`;
const LayerCell = styled.div`
  width: 22px;
  padding-left: 3px;
`;
const Field = styled.label<{ $w?: number; $tone?: "flat" | "title" | "raised" }>`
  position: relative;
  display: flex;
  align-items: center;
  width: ${(p) => p.$w}px;
  height: 22px;
  padding-left: 3px;
  border: 1px solid #aabfdf;
  background: ${PANEL};
  ${(p) =>
    p.$tone === "title" &&
    css`
      border-color: #c9c9dc;
      background: ${CHROME};
    `}
  ${(p) =>
    p.$tone === "raised" &&
    css`
      height: 23px;
      padding-left: 2px;
      border-color: #adadad;
      background: #e1e1e1;
      color: #000;
      font-family: ${WIDE};
    `}
`;
const Select = styled.select<{ $gap?: number }>`
  flex: 1;
  min-width: 0;
  height: 20px;
  padding: 0 18px 0 ${(p) => p.$gap ?? 0}px;
  border: 0;
  background: none;
  appearance: none;
`;
const FieldCaret = styled.span`
  position: absolute;
  right: 5px;
  pointer-events: none;
`;

const DocumentStrip = styled.div`
  height: 31px;
  margin-right: 2px;
  border-bottom: 2px solid #b9d1ea;
  background: #ababab;
`;
const ViewBar = styled.div`
  display: flex;
  align-items: center;
  height: 24px;
  padding: 0 0 1px 1px;
`;
const Rule = styled.span<{ $h?: number }>`
  flex: none;
  width: 1px;
  height: ${(p) => p.$h ?? 21}px;
  margin: 0 3px 0 2px;
  background: #a0a0a0;
`;

const Workspace = styled.main`
  position: relative;
  flex: 1;
  min-height: 400px;
  margin-right: 2px;
  overflow: hidden;
  background: #000;
`;
const Drawing = styled.svg`
  position: absolute;
  inset: 0;
  width: 100%;
  height: 100%;
`;
const Dialog = styled.section`
  position: absolute;
  left: 14px;
  top: 26px;
  width: 305px;
  background: ${CHROME};
  color: #000;
`;
const DialogTitle = styled.header`
  display: flex;
  align-items: center;
  height: 30px;
  padding: 0 0 1px 8px;
  background: #fff;
`;
const DialogName = styled.h2`
  flex: 1;
  margin: 0 0 0 5px;
  font: 12px/16px ${WIDE};
`;
const DialogBody = styled.div`
  display: flex;
  align-items: flex-end;
  justify-content: space-between;
  padding: 14px 13px 12px;
`;
const DialogRows = styled.div`
  display: flex;
  flex-direction: column;
  gap: 16px;
`;
const DialogRow = styled.div`
  display: flex;
  align-items: center;
  gap: 25px;
`;
const Sunken = styled.div`
  display: flex;
  gap: 1px;
  padding: 2px;
  border: 1px solid;
  border-color: #a0a0a0 #fff #fff #a0a0a0;
`;
const Toggle = styled.button<{ $on?: boolean }>`
  display: flex;
  align-items: center;
  justify-content: center;
  width: 20px;
  height: 20px;
  ${(p) =>
    p.$on &&
    css`
      border: 1px solid #2f6fc4;
      background: ${PRESSED};
    `}
`;

const DockBar = styled.div`
  display: flex;
  gap: 4px;
  height: 34px;
  margin-right: 2px;
  background: #d5d5d5;
`;
const DockPanel = styled.div`
  display: flex;
  align-items: center;
  padding-left: 2px;
  border-radius: 3px;
  background: ${CHROME};
`;
const Grip = styled.span`
  flex: none;
  width: 2px;
  height: 20px;
  margin-right: 3px;
  background: repeating-linear-gradient(#a0a0a0 0 2px, transparent 2px 4px);
`;
const PageButtons = styled.div`
  display: flex;
  margin-right: 3px;
`;
const PageButton = styled.button<{ $on?: boolean }>`
  width: 18px;
  height: 23px;
  padding-top: 2px;
  border: 1px solid;
  border-color: #c8c8c8 #a0a0a0 #a0a0a0 #000;
  font-family: ${WIDE};
  color: #000;
  ${(p) =>
    p.$on &&
    css`
      border: 1px solid #2f6fc4;
      background: ${PRESSED};
    `}
`;
const SnapButton = styled.button<{ $on?: boolean; $dotted?: boolean }>`
  display: flex;
  align-items: center;
  justify-content: center;
  flex: none;
  width: 28px;
  height: 28px;
  ${(p) =>
    p.$on &&
    css`
      border: 1px solid #2f6fc4;
      background: ${PRESSED};
    `}
  ${(p) =>
    p.$dotted &&
    css`
      background: radial-gradient(circle, #1b2f44 35%, transparent 45%) 0 0 / 3px 3px, ${PRESSED};
    `}
`;

const StatusBar = styled.footer`
  display: flex;
  height: 32px;
  margin-right: 2px;
  background: ${CHROME};
  color: #000;
`;
const Prompt = styled.p`
  width: 289px;
  margin: 0;
  padding-left: 3px;
  border-right: 1px solid #fff;
  overflow: hidden;
  white-space: pre;
  font: 12px/34px ${WIDE};
`;
const StatusGrip = styled.div`
  display: flex;
  align-items: center;
  width: 7px;
  padding-left: 2px;
  border-right: 1px solid #a0a0a0;
`;
const MessageField = styled.div`
  flex: 1;
  display: flex;
  align-items: flex-start;
  padding: 3px 0 3px 26px;
`;
const MessageTick = styled.span`
  width: 1px;
  height: 26px;
  background: #555;
`;
const StatusCell = styled.div<{ $w: number; $dark?: boolean }>`
  display: flex;
  align-items: center;
  justify-content: center;
  flex: none;
  width: ${(p) => p.$w}px;
  margin: 3px 0;
  border-left: 1px solid ${(p) => (p.$dark ? "#6a6a6a" : "#dedede")};
`;
const StatusText = styled(StatusCell)`
  justify-content: flex-start;
  padding-left: 3px;
`;

/* ---------- composed parts ---------- */
type PickProps = {
  label: string; value: string; w?: number; tone?: "flat" | "title" | "raised";
  icon?: React.ReactNode; gap?: number; caret?: string;
};
const Pick = ({ label, value, w, tone, icon, gap, caret }: PickProps) => (
  <Field $w={w} $tone={tone}>
    {icon}
    <Select aria-label={label} $gap={gap} defaultValue={value}>
      <option>{value}</option>
    </Select>
    <FieldCaret><Caret color={caret} size={tone === "raised" ? 8 : 6} /></FieldCaret>
  </Field>
);

type BigProps = { icon: React.ReactNode; lines: string[]; w: number; drop?: boolean };
const Big = ({ icon, lines, w, drop = false }: BigProps) => (
  <BigButton $w={w} $low={!drop}>
    {icon}
    <span>
      {lines.map((line, i) => (
        <BigLine key={i}>
          {line}
          {drop && i === lines.length - 1 && <Caret />}
        </BigLine>
      ))}
    </span>
  </BigButton>
);

const Small = ({ icon, label, drop }: { icon: React.ReactNode; label: string; drop?: boolean }) => (
  <DropPair>
    <IconButton aria-label={label}>{icon}</IconButton>
    {drop && <IconButton $w={13} aria-label={`Options ${label}`}><Caret /></IconButton>}
  </DropPair>
);

const TABS = ["Terrain", "Géométrie", "Site", "Corridors", "Rail", "Détail de modèle", "Production de dessin", "Dessin", "Utilitaires", "Collaborer", "Vue", "Aide"];

const ATTRS: [string, React.ReactNode, number][] = [
  ["Couleur", <ColorBoxIcon />, 72],
  ["Style de ligne", <LineStyleIcon />, 72],
  ["Épaisseur", <WeightIcon />, 62],
  ["Transparence", <SphereIcon />, 62],
  ["Priorité", <PriorityIcon />, 62],
];

const SNAPS: [string, React.ReactNode][] = [
  ["Proche", <SnapNear />], ["Point clé", <SnapKey />], ["Milieu", <SnapMid />], ["Centre", <SnapCenter />],
  ["Origine", <SnapOrigin />], ["Bissecteur", <SnapBisect />], ["Intersection", <SnapIntersect />],
  ["Tangente", <SnapTangent />], ["Perpendiculaire", <SnapPerp />],
];

/* Grid geometry: reference dots every 119 units, axis lines every tenth column. */
const STEP = 119;
const ORIGIN = { x: 26, y: 640 };
const gridDots = Array.from({ length: 7 }, (_, r) => r - 5).flatMap((r) =>
  Array.from({ length: 15 }, (_, c) => c + 1)
    .filter((c) => c !== 10)
    .map((c) => [ORIGIN.x + c * STEP, Math.round(ORIGIN.y + r * 118.8)])
);

const ViewCanvas = () => (
  <Drawing aria-label="Vue 1">
    <g fill="#8a8a8a">
      {gridDots.map(([x, y]) => <rect key={`${x}-${y}`} x={x} y={y} width="1" height="1" />)}
    </g>
    <g fill="#4a4a4a">
      <rect x={ORIGIN.x} y="0" width="1" height="100%" />
      <rect x={ORIGIN.x + 10 * STEP} y="0" width="1" height="100%" />
      <rect x="0" y={ORIGIN.y} width="100%" height="1" />
    </g>
    <circle cx={ORIGIN.x + 0.5} cy={ORIGIN.y + 0.5} r="12" fill="#10106c" stroke="#2424c4" />
    <path d="M0 640.500H39M26.500 628V652" stroke="#3434a0" />
    <path d="M26.500 637.500L29.500 640.500L26.500 643.500L23.500 640.500Z" fill="#2a2aff" />
    <path d="M26.500 565.500L50.500 595.500L38.500 589.500V622.500H14.500V589.500L2.500 595.500Z" fill="#006a00" stroke="#00c800" />
    <path d="M26.500 566V622" stroke="#2b7f2b" />
    <path d="M44.500 628.500H78L72 616.500L101.500 640.500L72 664.500L78 652.500H44.500Z" fill="#4e0306" stroke="#c80000" />
    <path d="M45 640.500H101" stroke="#6b2a2c" />
    <g fontFamily="DejaVu Sans, sans-serif" textAnchor="middle">
      <text x="26.500" y="612" fontSize="28" fill="#d4ead4">Y</text>
      <text x="66" y="650" fontSize="25" fill="#ecd6d6">X</text>
    </g>
    <circle cx="1222" cy="256" r="5.500" fill="#5a5a5a" stroke="#dcdcdc" strokeWidth="1.500" />
  </Drawing>
);

const SelectDialog = () => (
  <Dialog aria-label="Sélectionner l'élément">
    <DialogTitle>
      <WrenchGearIcon />
      <DialogName>Sélectionner l'élément</DialogName>
      <IconButton $w={45} aria-label="Réduire"><DlgMin /></IconButton>
      <IconButton $w={45} aria-label="Agrandir" disabled><DlgMax /></IconButton>
      <IconButton $w={47} aria-label="Fermer"><DlgClose /></IconButton>
    </DialogTitle>
    <DialogBody>
      <DialogRows>
        <DialogRow>
          <Sunken>
            <Toggle $on aria-label="Individuel"><TargetIcon /></Toggle>
            <Toggle aria-label="Bloc"><DashRect /></Toggle>
            <Toggle aria-label="Forme"><DashPara /></Toggle>
            <Toggle aria-label="Cercle"><DashCircle /></Toggle>
            <Toggle aria-label="Ligne"><DashLine /></Toggle>
          </Sunken>
          <IconButton aria-label="Désactiver les poignées"><DisableIcon /></IconButton>
        </DialogRow>
        <DialogRow>
          <Sunken>
            <Toggle $on aria-label="Nouveau"><NewSelIcon /></Toggle>
            <Toggle aria-label="Ajouter"><PlusIcon /></Toggle>
            <Toggle aria-label="Soustraire"><MinusIcon /></Toggle>
            <Toggle aria-label="Inverser"><InvertIcon /></Toggle>
            <Toggle aria-label="Tout sélectionner"><DashRing c={BLUE}><Dots /></DashRing></Toggle>
          </Sunken>
          <IconButton aria-label="Poignées" disabled><HandlesIcon /></IconButton>
        </DialogRow>
      </DialogRows>
      <IconButton $w={12} $h={12} aria-label="Afficher plus"><Caret color="#000" size={8} /></IconButton>
    </DialogBody>
  </Dialog>
);

export default function App() {
  return (
    <>
      <Global />
      <Shell>
        <TitleBar>
          <LogoCell><LogoIcon /></LogoCell>
          <Pick label="Flux de travail" value="Modélisation OpenRail" w={160} tone="title" />
          <QuickBar>
            <DropPair>
              <IconButton $w={20} aria-label="DGN V8"><V8Icon /></IconButton>
              <IconButton $w={12} aria-label="Options DGN"><Caret /></IconButton>
            </DropPair>
            <IconButton $w={20} aria-label="Ouvrir"><FolderIcon /></IconButton>
            <IconButton $w={20} aria-label="Enregistrer"><SaveIcon /></IconButton>
            <IconButton $w={20} aria-label="Enregistrer les paramètres"><SaveSettingsIcon /></IconButton>
            <IconButton $w={20} aria-label="Compresser"><ZipIcon /></IconButton>
            <DropPair>
              <IconButton $w={20} aria-label="Annuler"><UndoIcon /></IconButton>
              <IconButton $w={14} aria-label="Historique"><Caret /></IconButton>
            </DropPair>
            <IconButton $w={20} aria-label="Rétablir"><UndoIcon flip color="#8cc3ea" /></IconButton>
            <IconButton $w={20} aria-label="Épingler"><PinIcon /></IconButton>
            <IconButton $w={20} aria-label="Imprimer"><PrintIcon /></IconButton>
            <IconButton $w={20} aria-label="Personnaliser"><CustomizeIcon /></IconButton>
          </QuickBar>
          <Grow $f={5} />
          <Title>33.dgn [2D - V8 DGN] - OpenRail Designer CE 2022 Release 1</Title>
          <Grow $f={3} />
          <SearchBox>
            <SearchInput aria-label="Recherche dans le ruban" placeholder="Recherche dans le ruban (F4)" />
            <IconButton $w={22} $h={20} aria-label="Rechercher"><SearchIcon /></IconButton>
            <SearchMore $w={17} $h={20} aria-label="Options de recherche"><Caret size={6} /></SearchMore>
          </SearchBox>
          <TitleActions>
            <IconButton $w={24} aria-label="Notifications"><BellIcon /></IconButton>
            <IconButton $w={28} aria-label="Aide"><HelpIcon /></IconButton>
            <IconButton $w={12} aria-label="Options d'aide"><Caret /></IconButton>
            <Avatar aria-label="Compte utilisateur">UC</Avatar>
            <IconButton $w={16} aria-label="Options du compte"><Caret /></IconButton>
          </TitleActions>
          <WindowButtons>
            <IconButton aria-label="Réduire la fenêtre"><MinIcon /></IconButton>
            <IconButton aria-label="Agrandir la fenêtre"><MaxIcon /></IconButton>
            <IconButton aria-label="Fermer la fenêtre"><CloseIcon /></IconButton>
          </WindowButtons>
        </TitleBar>

        <TabStrip>
          <FileTab>Fichier</FileTab>
          <Tab $active>Accueil</Tab>
          {TABS.map((t) => <Tab key={t}>{t}</Tab>)}
          <Grow />
          <IconButton $w={28} aria-label="Réduire le ruban"><ChevronUp /></IconButton>
        </TabStrip>

        <Ribbon>
          <Group $w={353}>
            <AttrBody>
              <AttrRow>
                <LayerCell><LayerIcon /></LayerCell>
                <Pick label="Modèle d'élément" value="Aucun" w={140} />
                <Pick label="Niveau" value="Par défaut" w={174} />
              </AttrRow>
              <AttrRow>
                {ATTRS.map(([label, icon, w]) => (
                  <Pick key={label} label={label} value="0" w={w} icon={icon} gap={6} />
                ))}
              </AttrRow>
            </AttrBody>
            <GroupName>Attributs</GroupName>
          </Group>

          <Group $w={187}>
            <GroupBody>
              <Big icon={<ExplorerIcon />} lines={["Explorer"]} w={50} />
              <Big icon={<AttachIcon />} lines={["Attacher", "(outils)"]} w={59} drop />
              <SmallColumn>
                <Small icon={<CubeIcon />} label="Modèles" drop />
                <Small icon={<DocIcon />} label="Références" drop />
                <Small icon={<GreenInfoIcon />} label="Informations de niveau" drop />
              </SmallColumn>
              <SmallColumn>
                <Small icon={<YellowLayersIcon />} label="Niveaux" drop />
                <Small icon={<InfoPanelIcon />} label="Propriétés" />
                <Small icon={<KeysIcon />} label="Raccourcis clavier" drop />
              </SmallColumn>
            </GroupBody>
            <GroupName>Primaire</GroupName>
          </Group>

          <Group $w={218}>
            <GroupBody>
              <Big icon={<PointerIcon />} lines={["Sélectionner", "l'élément"]} w={72} />
              <SmallGrid>
                <IconButton aria-label="Tout sélectionner"><DashRing c={BLUE}><Dots /></DashRing></IconButton>
                <IconButton aria-label="Verrouiller"><DashRing c="#9eb0bd"><LockGlyph /></DashRing></IconButton>
                <IconButton aria-label="Ne rien sélectionner"><DashRing c="#a9b3bb" /></IconButton>
                <IconButton aria-label="Déverrouiller"><DashRing c="#8fc9ee"><LockGlyph open /></DashRing></IconButton>
                <span />
                <IconButton aria-label="Groupe"><CopyGreenIcon /></IconButton>
              </SmallGrid>
              <Big icon={<FenceIcon />} lines={["Outils", "clôture"]} w={58} drop />
              <SmallColumn>
                <Small icon={<CutIcon />} label="Couper" />
                <Small icon={<CopyIcon />} label="Copier" />
                <Small icon={<PasteIcon />} label="Coller" drop />
              </SmallColumn>
            </GroupBody>
            <GroupName>Sélection</GroupName>
          </Group>

          <Group $w={249}>
            <GroupBody>
              <Big icon={<ReportsIcon />} lines={["Rapports", ""]} w={58} drop />
              <Big icon={<AnalysisIcon />} lines={["Analyse", "Civil"]} w={50} drop />
              <Big icon={<CorridorIcon />} lines={["Rapports", "Corridor"]} w={66} drop />
              <Big icon={<PlanViewIcon />} lines={["Vue plan", "dynamique"]} w={68} />
            </GroupBody>
            <GroupName>Rapport et analyse de modèle</GroupName>
          </Group>

          <Group $w={276}>
            <GroupBody>
              <Big icon={<TerrainIcon />} lines={["Importation", "de terrain"]} w={76} drop />
              <Big icon={<GeometryIcon />} lines={["Importer", "géométrie"]} w={68} drop />
              <Big icon={<IrdIcon />} lines={["Importer", "IRD"]} w={58} />
              <Big icon={<IfcIcon />} lines={["Exporter au", "format IFC"]} w={66} />
            </GroupBody>
            <GroupName>Importer/Exporter modèle</GroupName>
          </Group>
        </Ribbon>

        <DocumentStrip />

        <ViewBar>
          <IconButton aria-label="Attributs de vue"><ViewAttrIcon /></IconButton>
          <IconButton $w={15} aria-label="Options d'attributs"><Caret color="#000" size={8} /></IconButton>
          <IconButton aria-label="Style d'affichage"><DisplayStyleIcon /></IconButton>
          <IconButton aria-label="Luminosité"><SunIcon /></IconButton>
          <IconButton $w={15} aria-label="Options de luminosité"><Caret color="#000" size={8} /></IconButton>
          <Rule />
          <IconButton aria-label="Actualiser la vue"><BrushIcon /></IconButton>
          <IconButton aria-label="Zoom avant"><ZoomInIcon /></IconButton>
          <IconButton aria-label="Zoom arrière"><ZoomOutIcon /></IconButton>
          <IconButton aria-label="Zoom fenêtre"><ZoomWindowIcon /></IconButton>
          <IconButton aria-label="Ajuster la vue"><FitIcon /></IconButton>
          <IconButton aria-label="Pivoter la vue"><RotateIcon /></IconButton>
          <IconButton aria-label="Panoramique"><HandIcon /></IconButton>
          <Rule />
          <IconButton aria-label="Vue précédente"><PrevViewIcon /></IconButton>
          <IconButton aria-label="Vue suivante"><NextViewIcon /></IconButton>
          <Rule />
          <IconButton aria-label="Copier la vue"><CopyViewIcon /></IconButton>
          <IconButton aria-label="Volume de découpe"><ClipVolumeIcon /></IconButton>
          <IconButton aria-label="Masque de découpe"><ClipMaskIcon /></IconButton>
        </ViewBar>

        <Workspace>
          <ViewCanvas />
          <SelectDialog />
        </Workspace>

        <DockBar>
          <DockPanel>
            <Grip />
            <IconButton $w={29} $h={26} aria-label="Précédent" disabled><RoundArrow /></IconButton>
            <IconButton $w={14} aria-label="Historique précédent"><Caret size={8} /></IconButton>
            <IconButton $w={29} $h={26} aria-label="Suivant" disabled><RoundArrow flip /></IconButton>
            <IconButton $w={14} aria-label="Historique suivant"><Caret size={8} /></IconButton>
            <IconButton $w={29} $h={26} aria-label="Modèle" disabled><DiscIcon /></IconButton>
            <IconButton $w={16} aria-label="Options du modèle"><Caret size={8} /></IconButton>
            <Pick label="Groupe de vues" value="2D Metric Design" w={168} tone="raised" icon={<ViewsIcon />} gap={6} caret="#000" />
            <Rule $h={26} />
            <IconButton $w={29} $h={26} aria-label="Gérer les groupes de vues"><ViewsIcon s={24} /></IconButton>
            <Rule $h={26} />
            <PageButtons>
              {[1, 2, 3, 4, 5, 6, 7, 8].map((n) => <PageButton key={n} $on={n === 1}>{n}</PageButton>)}
            </PageButtons>
          </DockPanel>
          <DockPanel>
            <Grip />
            <SnapButton $on aria-label="AccuSnap"><CrossIcon /></SnapButton>
            <Rule $h={26} />
            {SNAPS.map(([label, icon], i) => (
              <SnapButton key={label} aria-label={label} $on={i === 1} $dotted={i === 1}>{icon}</SnapButton>
            ))}
            <Rule $h={26} />
            <SnapButton aria-label="Accrochage multiple"><SnapMulti /></SnapButton>
          </DockPanel>
        </DockBar>

        <StatusBar>
          <Prompt>Sélectionner l'élément &gt; Identifier élément à ajo</Prompt>
          <StatusGrip><Grip /></StatusGrip>
          <MessageField><Svg w={6} h={4}><path d="M3 0L6 3H0Z" fill="#000" /></Svg><MessageTick /></MessageField>
          <StatusCell $w={34} $dark><StatusSnapIcon /></StatusCell>
          <StatusCell $w={34}><PadlockIcon /></StatusCell>
          <StatusText $w={149}>Par défaut</StatusText>
          <StatusCell $w={133} $dark />
          <StatusCell $w={35} $dark />
          <StatusCell $w={34} />
          <StatusCell $w={34}><SaveIcon /></StatusCell>
          <StatusCell $w={34}><ScrollIcon /></StatusCell>
          <StatusCell $w={34}><WrenchGearIcon /></StatusCell>
          <StatusCell $w={34} />
          <StatusCell $w={34}><BookBanIcon /></StatusCell>
          <StatusCell $w={34} />
          <StatusCell $w={34}><ShieldIcon /></StatusCell>
          <StatusCell $w={36}><GlobeXIcon /></StatusCell>
        </StatusBar>
      </Shell>
    </>
  );
}
